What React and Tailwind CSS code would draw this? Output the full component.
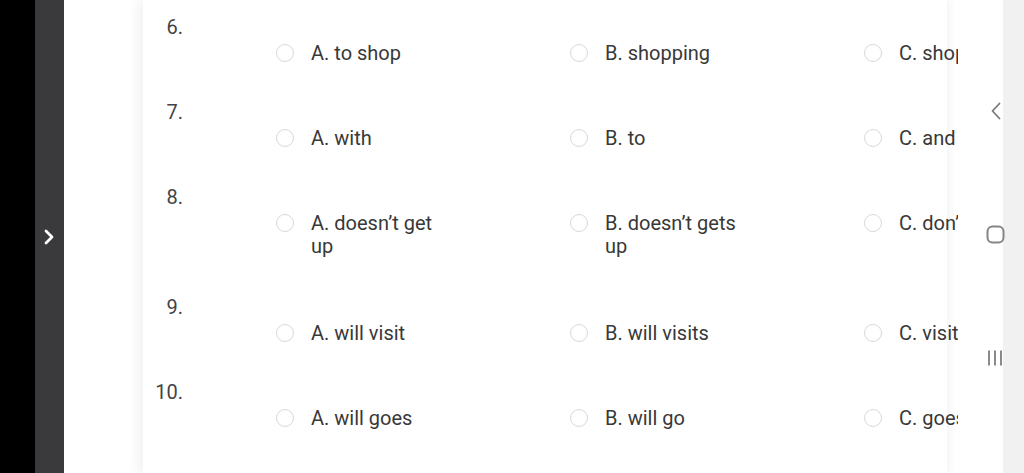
import React from "react";

const questions = [
  { n: "6.", opts: ["A. to shop", "B. shopping", "C. shopping"], pb: "pb-[36px]" },
  { n: "7.", opts: ["A. with", "B. to", "C. and"], pb: "pb-[36px]" },
  { n: "8.", opts: ["A. doesn’t get up", "B. doesn’t gets up", "C. don’t get up"], pb: "pb-[38px]" },
  { n: "9.", opts: ["A. will visit", "B. will visits", "C. visit"], pb: "pb-[36px]" },
  { n: "10.", opts: ["A. will goes", "B. will go", "C. goes"], pb: "pb-[36px]" },
];

function Radio() {
  return (
    <span className="mt-[2px] block h-[18px] w-[18px] shrink-0 rounded-full border border-[#d9d9d9] bg-white" />
  );
}

export default function App() {
  return (
    <div
      className="flex h-[473px] w-[1024px] overflow-hidden bg-white"
      style={{ fontFamily: "Roboto, 'Noto Sans', Arial, sans-serif" }}
    >
      <div className="w-[35px] shrink-0 bg-black" />
      <div className="flex w-[29px] shrink-0 items-center justify-center bg-[#3a3a3c]">
        <svg width="14" height="18" viewBox="0 0 14 18" className="ml-[-1px] mt-[1px]">
          <path d="M4 3 L10 9 L4 15" fill="none" stroke="white" strokeWidth="2.8" strokeLinecap="round" strokeLinejoin="round" />
        </svg>
      </div>
      <div className="relative flex-1 bg-white">
        <div className="h-full w-[894px] overflow-hidden">
          <div className="ml-[79px] h-full w-[804px] bg-white pt-[16px] shadow-[-6px_0_10px_rgba(0,0,0,0.05),5px_0_5px_rgba(0,0,0,0.03)]">
            {questions.map((q) => (
              <div key={q.n} className={q.pb}>
                <div className="w-[40px] text-right text-[20px] leading-[23px] text-[#444]">{q.n}</div>
                <div className="mt-[3px] ml-[133px] flex w-[882px]">
                  {q.opts.map((o) => (
                    <div key={o} className="flex w-[294px] shrink-0 gap-[17px]">
                      <Radio />
                      <span className="w-[140px] text-[20px] leading-[23px] text-[#383838]">{o}</span>
                    </div>
                  ))}
                </div>
              </div>
            ))}
          </div>
        </div>
        <div className="absolute left-[923px] top-[102px] flex w-[18px] justify-center">
          <svg width="12" height="18" viewBox="0 0 12 18">
            <path d="M9.5 1.5 L2.5 9 L9.5 16.5" fill="none" stroke="#7a7a7a" strokeWidth="1.8" strokeLinecap="round" strokeLinejoin="round" />
          </svg>
        </div>
        <div className="absolute left-[922px] top-[225px]">
          <svg width="20" height="20" viewBox="0 0 20 20">
            <rect x="1.5" y="1.5" width="16" height="16" rx="5" fill="none" stroke="#858585" strokeWidth="2" />
          </svg>
        </div>
        <div className="absolute left-[922px] top-[349px]">
          <svg width="18" height="18" viewBox="0 0 18 18">
            <path d="M3 1.5 V16.5 M9 1.5 V16.5 M15 1.5 V16.5" fill="none" stroke="#8a8a8a" strokeWidth="2" />
          </svg>
        </div>
      </div>
      <div className="w-[21px] shrink-0 bg-[#f1f1f1]" />
    </div>
  );
}
